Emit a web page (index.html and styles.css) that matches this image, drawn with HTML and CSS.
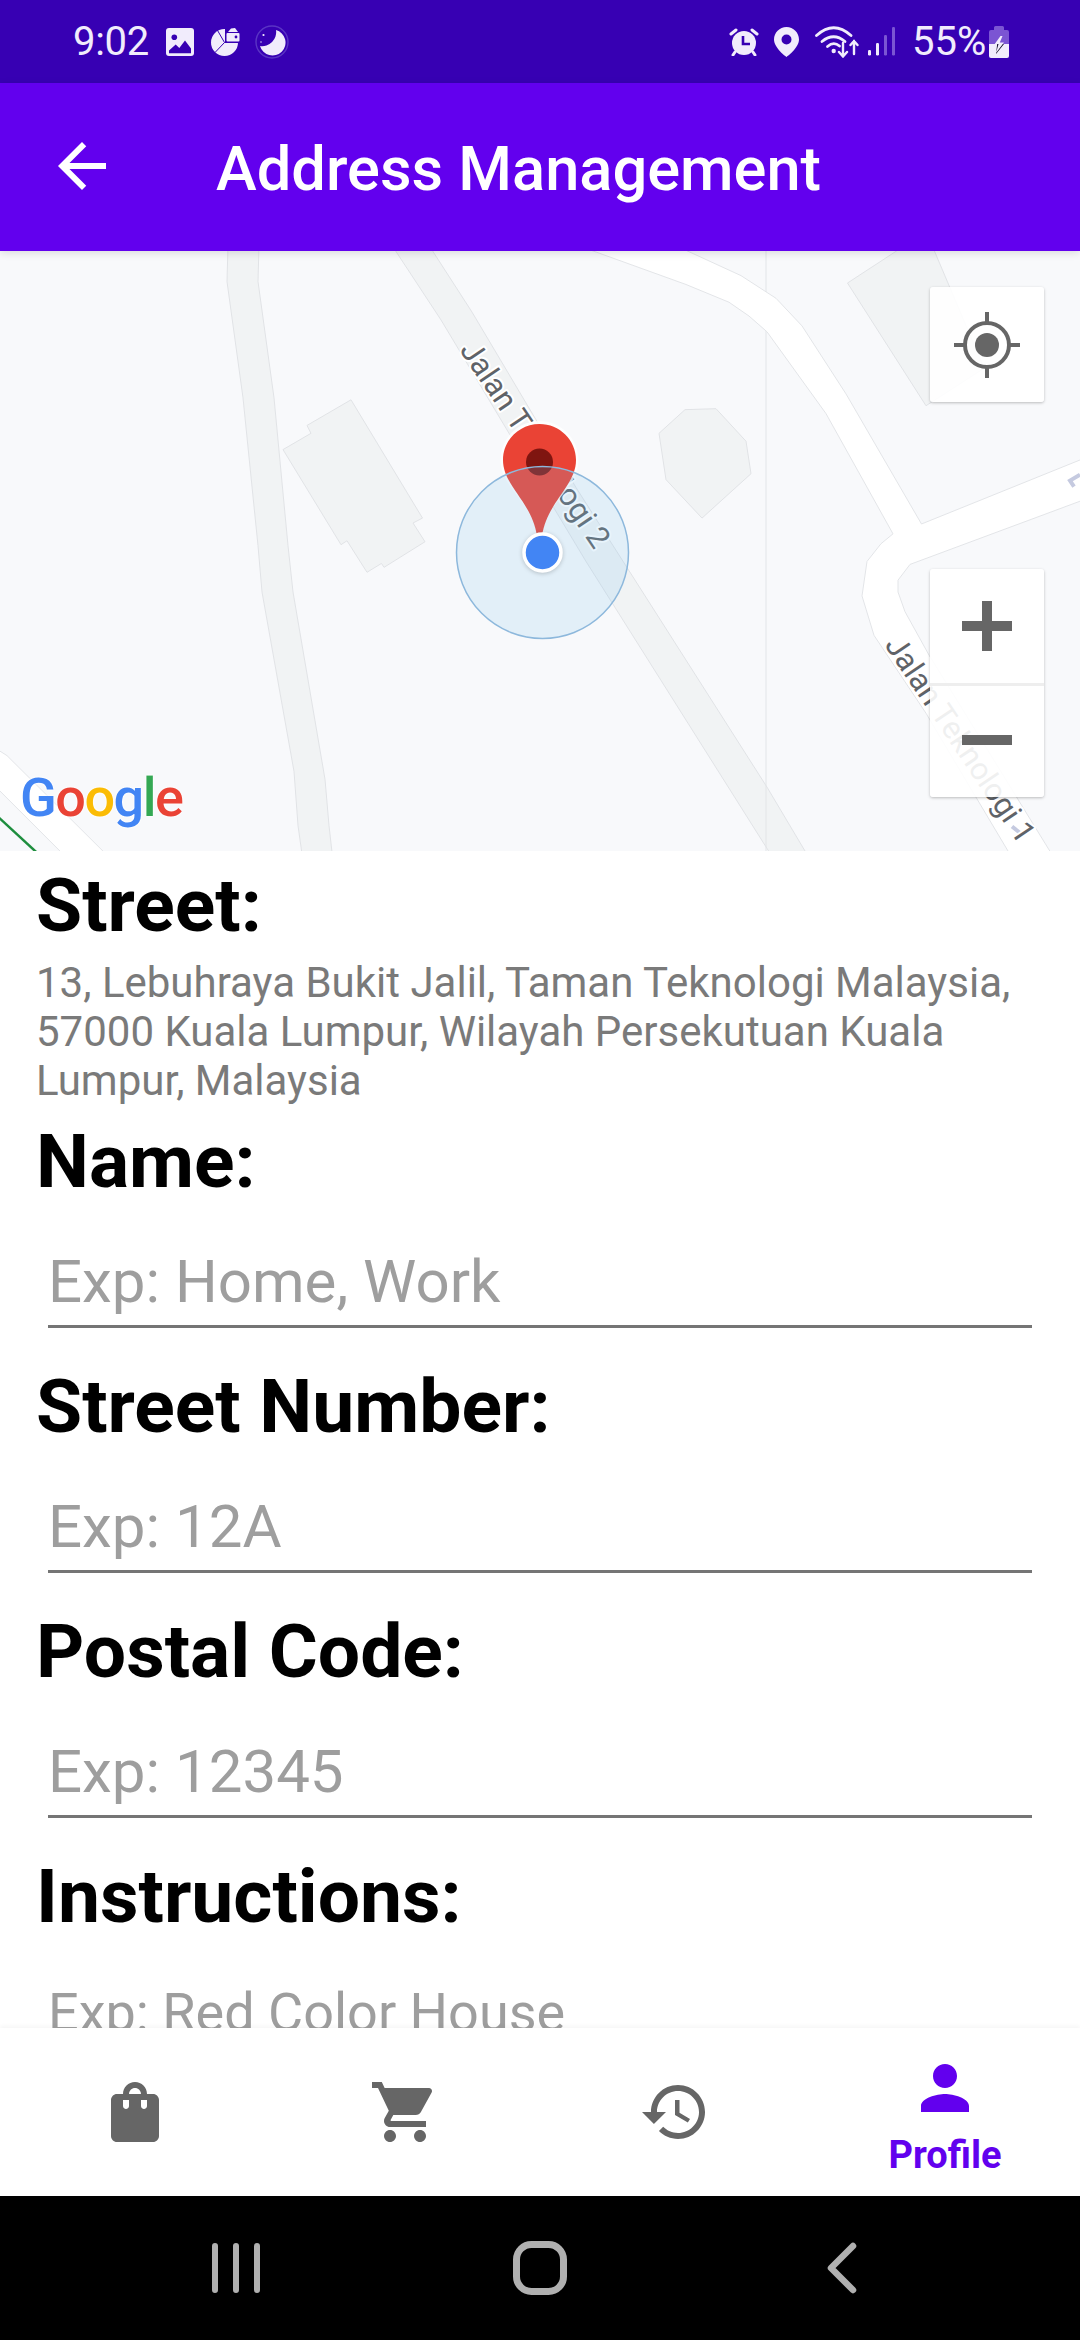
FILE: index.html
```html
<!DOCTYPE html>
<html lang="en">
<head>
<meta charset="utf-8">
<title>Address Management</title>
<link rel="stylesheet" href="styles.css">
</head>
<body>
<div class="phone">
  <header class="status">
    <div class="status-left">
      <span class="time">9:02</span>
      <svg class="ic-image" viewBox="0 0 28 28"><rect width="28" height="28" rx="3" fill="#f1ecfc"/><circle cx="8.3" cy="9.3" r="2.8" fill="#3700B3"/><path d="M3 25.3V22.5L9.7 16.5 13.3 20 19 12.5 25 20.5V25.3Z" fill="#3700B3"/></svg>
      <svg class="ic-pie" viewBox="0 0 30 30"><circle cx="13.5" cy="15.5" r="13.5" fill="#f1ecfc"/><path d="M13.5 15.5 6 2.5M13.5 15.5 4 25.5M13.5 15.5H29" stroke="#3700B3" stroke-width="1" fill="none"/><rect x="14" y="0" width="16" height="15.5" fill="#3700B3"/><rect x="15.5" y="6" width="13" height="8.5" rx="1" fill="#f1ecfc"/><path d="M17 5 20 1.5 24 1 27 5Z" fill="#f1ecfc"/><circle cx="25" cy="10" r="1.4" fill="#3700B3"/></svg>
      <svg class="ic-moon" viewBox="0 0 34 34"><circle cx="17" cy="17" r="16" fill="none" stroke="#5a34c4" stroke-width="1.4"/><path d="M21 5A13 13 0 1 1 5 21 14 14 0 0 0 21 5Z" fill="#f1ecfc"/><circle cx="8.5" cy="10" r="1.1" fill="#f1ecfc"/><circle cx="6" cy="17" r=".7" fill="#f1ecfc"/></svg>
    </div>
    <div class="status-right">
      <svg class="ic-alarm" viewBox="0 0 30 28"><circle cx="15" cy="15" r="12" fill="#f1ecfc"/><path d="M2 6 7 2M28 6 23 2M6 24 4 27M24 24 26 27" stroke="#f1ecfc" stroke-width="3" stroke-linecap="round"/><path d="M14 8V16H21" stroke="#3700B3" stroke-width="2.6" fill="none"/></svg>
      <svg class="ic-loc" viewBox="0 0 25 30"><path fill-rule="evenodd" fill="#f1ecfc" d="M12.500 0C5.600 0 0 5.600 0 12.500 0 21 12.500 30 12.500 30S25 21 25 12.500C25 5.600 19.400 0 12.500 0ZM12.500 7.500A5 5 0 1 1 12.500 17.500 5 5 0 0 1 12.500 7.500Z"/></svg>
      <svg class="ic-wifi" viewBox="0 0 44 32"><g fill="none" stroke="#f1ecfc" stroke-width="2.8" stroke-linecap="round"><path d="M1.500 9.500Q18.700-6 36 9.500"/><path d="M7 15.500Q18.700 6 30 15.500"/><path d="M12.500 20.500Q18.700 15 24.500 20"/><path d="M28 17V30M24 26 28 30.500 32 26" stroke-width="2.4"/><path d="M39 28V15M35.500 19 39 15 42.500 19" stroke-width="2.4"/></g><circle cx="18.700" cy="25" r="2.200" fill="#f1ecfc"/></svg>
      <svg class="ic-signal" viewBox="0 0 27 29"><rect x="0" y="23" width="3" height="5.500" rx="1.200" fill="#f1ecfc"/><rect x="8" y="16" width="3" height="12.500" rx="1.200" fill="#f1ecfc"/><rect x="16" y="8" width="3" height="20.500" rx="1.200" fill="#7b55d3"/><rect x="24" y="0" width="3" height="28.500" rx="1.200" fill="#7b55d3"/></svg>
      <span class="pct">55%</span>
      <svg class="ic-batt" viewBox="0 0 20 32"><path d="M5 1.500Q5 0 6.500 0H13.500Q15 0 15 1.500V4H18Q20 4 20 6V18H0V6Q0 4 2 4H5Z" fill="#7b55d3"/><path d="M0 18H20V30Q20 32 18 32H2Q0 32 0 30Z" fill="#f1ecfc"/><path d="M11.500 10 5 19H9.500L7 27 15 16.500H10.800L13.500 10Z" fill="#f1ecfc"/><path d="M8.200 18H9.500L7 27 13.800 18H15L7 28Z" fill="#141028"/></svg>
    </div>
  </header>

  <div class="appbar">
    <svg class="back" viewBox="0 0 24 24"><path d="M20 11H7.830l5.590-5.590L12 4l-8 8 8 8 1.410-1.410L7.830 13H20v-2z" fill="#fff"/></svg>
    <h1 class="title">Address Management</h1>
  </div>

  <section class="map">
    <svg class="map-canvas" viewBox="0 251 1080 600">
      <rect x="0" y="251" width="1080" height="600" fill="#f8f9fb"/>
      <g transform="translate(0 3.6) scale(1 .9856)">
        <path class="road-grey" d="M228 245 227 282 243 400 258 550 262 597 294 779 298 834 303 870H333L329 834 325 787 293 597 288 550 274 400 258 282 259 245Z"/>
        <path class="road-grey" d="M395 250 441 321 586 566 760 846 775 870H811L767 795 576 491 537 424 472 313 432 250Z"/>
        <path class="bldg" d="M351 402 307 428 311 436 283 452.500 341 549 347 545 367 577 381.500 568 384 572 425 546 413 527 422.500 522Z"/>
        <path class="bldg" d="M685 412 716 411 746 444 751 477 702 522 666 483 659 436Z"/>
        <path class="bldg" d="M898 250 847.500 283.500 926 408 984 370 934 250Z"/>
        <path class="line" d="M766 240V870"/>
        <path class="road-white" d="M585 248 686 285 729 303Q750 316 767 333L826 416 893 538 881 548 867 566 862 601 874 641 926 720 1014 870H1056L929 661 905 617 898 597 898 585 910 569 1085 503V461L921.500 528 846 396 802 327 776 299 741 276 681 248Z"/>
        <path class="road-white" d="M-10 752 7 763 113 870H70L0 799-10 790Z"/>
        <path class="green" d="M-2 825 46 870"/>
        <path class="arrow" d="M1080 478 1070 484 1074 490M1012 835 1022 843"/>
      </g>
      <text class="road-label" transform="translate(459 350) rotate(56)">Jalan Teknologi 2</text>
      <text class="road-label" transform="translate(884 645) rotate(56)">Jalan Teknologi 1</text>
      <path class="pin-halo" d="M539.500 421C518 421 500.500 438.500 500.500 460 500.500 487 530 500 538 536H541C549 500 578.500 487 578.500 460 578.500 438.500 561 421 539.500 421Z"/>
      <path class="pin" d="M539.500 424C519.500 424 503 440 503 460 503 486 532 502 537 536H542C547 502 576 486 576 460 576 440 559.500 424 539.500 424Z"/>
      <circle cx="539.500" cy="462" r="13.500" fill="#7f1510"/>
      <circle class="accuracy" cx="542.500" cy="552.500" r="86"/>
      <circle class="dot" cx="542.500" cy="552.500" r="18.500"/>
    </svg>
    <div class="logo"><span class="g-b">G</span><span class="g-r">o</span><span class="g-y">o</span><span class="g-b">g</span><span class="g-g">l</span><span class="g-r">e</span></div>
    <button class="map-btn locate" aria-label="My location">
      <svg class="locate-ic" viewBox="0 0 66 66"><circle cx="33" cy="33" r="22" fill="none" stroke="#666" stroke-width="4"/><circle cx="33" cy="33" r="12" fill="#666"/><path d="M33 0V11M33 55V66M0 33H11M55 33H66" stroke="#666" stroke-width="4"/></svg>
    </button>
    <div class="zoom">
      <button class="zoom-btn" aria-label="Zoom in"><svg class="zoom-ic" viewBox="0 0 50 50"><path d="M20 0H30V20H50V30H30V50H20V30H0V20H20Z" fill="#666"/></svg></button>
      <button class="zoom-btn minus" aria-label="Zoom out"><svg class="zoom-ic" viewBox="0 0 50 50"><rect x="0" y="20" width="50" height="10" fill="#666"/></svg></button>
    </div>
  </section>

  <main class="form">
    <div class="label">Street:</div>
    <p class="addr">13, Lebuhraya Bukit Jalil, Taman Teknologi Malaysia, 57000 Kuala Lumpur, Wilayah Persekutuan Kuala Lumpur, Malaysia</p>
    <div class="label name">Name:</div>
    <div class="input">Exp: Home, Work</div>
    <div class="label">Street Number:</div>
    <div class="input">Exp: 12A</div>
    <div class="label">Postal Code:</div>
    <div class="input">Exp: 12345</div>
    <div class="label">Instructions:</div>
    <div class="input input-small">Exp: Red Color House</div>
  </main>

  <nav class="tabs">
    <div class="tab"><svg class="tab-ic" viewBox="0 0 24 24"><path d="M18 6h-2c0-2.210-1.790-4-4-4S8 3.790 8 6H6C4.900 6 4 6.900 4 8v12c0 1.100.9 2 2 2h12c1.100 0 2-.9 2-2V8C20 6.900 19.100 6 18 6zM10 10c0 .55-.45 1-1 1s-1-.45-1-1V8h2v2zM12 4c1.100 0 2 .9 2 2h-4c0-1.100.9-2 2-2zM16 10c0 .55-.45 1-1 1s-1-.45-1-1V8h2v2z"/></svg></div>
    <div class="tab"><svg class="tab-ic" viewBox="0 0 24 24"><path d="M7 18c-1.100 0-1.990.9-1.990 2S5.900 22 7 22s2-.9 2-2-.9-2-2-2zM1 2v2h2l3.600 7.590-1.350 2.450c-.16.28-.25.61-.25.96 0 1.100.9 2 2 2h12v-2H7.420c-.14 0-.25-.11-.25-.25l.03-.12.9-1.630h7.450c.75 0 1.410-.41 1.750-1.030l3.580-6.490c.08-.14.12-.31.12-.48 0-.55-.45-1-1-1H5.210l-.94-2H1zm16 16c-1.100 0-1.990.9-1.990 2s.89 2 1.990 2 2-.9 2-2-.9-2-2-2z"/></svg></div>
    <div class="tab"><svg class="tab-ic" viewBox="0 0 24 24"><path d="M13 3c-4.970 0-9 4.030-9 9H1l3.890 3.890.07.14L9 12H6c0-3.870 3.130-7 7-7s7 3.130 7 7-3.130 7-7 7c-1.930 0-3.680-.79-4.940-2.060l-1.420 1.420C8.270 19.990 10.510 21 13 21c4.970 0 9-4.030 9-9s-4.030-9-9-9zm-1 5v5l4.280 2.540.72-1.210-3.500-2.080V8H12z"/></svg></div>
    <div class="tab active"><svg class="tab-ic" viewBox="0 0 24 24"><path d="M12 12c2.210 0 4-1.790 4-4s-1.790-4-4-4-4 1.790-4 4 1.790 4 4 4zm0 2c-2.670 0-8 1.340-8 4v2h16v-2c0-2.660-5.330-4-8-4z"/></svg><span class="tab-label">Profile</span></div>
  </nav>

  <footer class="sysnav">
    <svg class="sys-recents" viewBox="0 0 48 50"><path d="M3 3V47M24 3V47M45 3V47" stroke="#b0b0b0" stroke-width="6" stroke-linecap="round"/></svg>
    <svg class="sys-home" viewBox="0 0 54 54"><rect x="3.500" y="3.500" width="47" height="47" rx="15" fill="none" stroke="#b0b0b0" stroke-width="7"/></svg>
    <svg class="sys-back" viewBox="0 0 30 52"><path d="M26 4 4 26 26 48" fill="none" stroke="#b0b0b0" stroke-width="6.500" stroke-linecap="round" stroke-linejoin="round"/></svg>
  </footer>
</div>
</body>
</html>
```
FILE: styles.css
```css
* { box-sizing: border-box; }
html, body { margin: 0; padding: 0; }
body { background: #fff; font-family: Roboto, "Liberation Sans", sans-serif; }
.phone { width: 1080px; height: 2340px; display: flex; flex-direction: column; overflow: hidden; }

/* status bar */
.status { height: 83px; flex: none; background: #3700B3; color: #f1ecfc; display: flex; justify-content: space-between; align-items: center; padding: 0 71px 0 73px; font-size: 40px; }
.status-left, .status-right { display: flex; align-items: center; }
.time { width: 74px; margin-right: 19px; line-height: 44px; letter-spacing: -.3px; }
.ic-image { width: 28px; height: 28px; margin-right: 17px; }
.ic-pie { width: 30px; height: 30px; margin-right: 14px; }
.ic-moon { width: 34px; height: 34px; }
.ic-alarm { width: 30px; height: 28px; margin-right: 15px; }
.ic-loc { width: 25px; height: 30px; margin-right: 16px; }
.ic-wifi { width: 44px; height: 32px; margin-right: 9px; }
.ic-signal { width: 27px; height: 29px; margin-right: 17px; }
.pct { width: 71px; margin-right: 6px; line-height: 44px; white-space: nowrap; }
.ic-batt { width: 20px; height: 32px; }

/* app bar */
.appbar { height: 168px; flex: none; background: #6200EE; display: flex; align-items: center; padding-left: 46px; position: relative; z-index: 2; box-shadow: 0 2px 8px rgba(0,0,0,.12); }
.back { width: 72px; height: 72px; flex: none; margin-right: 98px; margin-top: -2px; }
.title { margin: 4px 0 0; color: #fff; font-size: 61.4px; font-weight: 500; line-height: 70px; white-space: nowrap; }

/* map */
.map { height: 600px; flex: none; position: relative; overflow: hidden; background: #f8f9fb; }
.map-canvas { position: absolute; left: 0; top: 0; width: 1080px; height: 600px; display: block; }
.road-grey, .bldg { fill: #f1f3f4; stroke: #e1e3e6; stroke-width: 1; }
.road-white { fill: #fff; stroke: #e3e5e8; stroke-width: 1; }
.line { stroke: #e3e5e8; stroke-width: 1; fill: none; }
.green { stroke: #1e8e3e; stroke-width: 2.5; fill: none; }
.arrow { stroke: #c5cae0; stroke-width: 4; fill: none; }
.road-label { font-family: Roboto, "Liberation Sans", sans-serif; font-size: 31px; fill: #5f6368; stroke: #fff; stroke-width: 4px; paint-order: stroke; stroke-linejoin: round; }
.pin-halo { fill: #fff; opacity: .8; }
.pin { fill: #ea4335; }
.accuracy { fill: rgba(128,194,236,.18); stroke: #8db8dc; stroke-width: 1.5; }
.dot { fill: #4285f4; stroke: #fff; stroke-width: 3.500; filter: drop-shadow(0 1px 2px rgba(0,0,0,.2)); }
.logo { position: absolute; left: 20px; top: 513px; font-family: Roboto, "Open Sans", sans-serif; font-size: 54px; line-height: 68px; font-weight: 500; letter-spacing: -1.500px; text-shadow: 0 0 3px #fff, 0 0 3px #fff; }
.g-b { color: #4285f4; }
.g-r { color: #ea4335; }
.g-y { color: #fbbc05; }
.g-g { color: #34a853; }
.map-btn, .zoom { position: absolute; left: 930px; width: 114px; background: rgba(255,255,255,.9); border-radius: 3px; box-shadow: 0 1px 3px rgba(0,0,0,.25); }
.map-btn { top: 36px; height: 115px; border: 0; padding: 0; display: flex; align-items: center; justify-content: center; }
.locate-ic { width: 66px; height: 66px; display: block; }
.zoom { top: 318px; height: 228px; display: flex; flex-direction: column; }
.zoom-btn { height: 114px; flex: none; border: 0; padding: 0; background: transparent; display: flex; align-items: center; justify-content: center; }
.minus { border-top: 3px solid #eee; padding-bottom: 3px; }
.zoom-ic { width: 50px; height: 50px; display: block; }

/* form */
.form { flex: 1; min-height: 0; overflow: hidden; padding: 12px 36px 0; background: #fff; }
.label { font-size: 75px; line-height: 84px; font-weight: 700; color: #000; white-space: nowrap; }
.addr { margin: 11px 0 0; font-size: 42px; line-height: 49px; color: #7a7a7a; width: 1000px; }
.name { margin-top: 14px; }
.input { height: 125px; margin: 0 12px 36px; padding: 45px 0 9px 0; border-bottom: 3px solid #757575; font-size: 60px; line-height: 68px; color: #9e9e9e; white-space: nowrap; }
.input-small { font-size: 54px; padding-top: 41px; }

/* tabs */
.tabs { height: 168px; flex: none; background: #fff; display: grid; grid-template-columns: repeat(4, 270px); position: relative; box-shadow: 0 -2px 4px rgba(0,0,0,.04); }
.tab { display: flex; flex-direction: column; align-items: center; padding-top: 48px; }
.tab-ic { width: 72px; height: 72px; fill: #666; display: block; flex: none; }
.active { padding-top: 24px; }
.active .tab-ic { fill: #6200EE; }
.tab-label { font-size: 38px; line-height: 42px; font-weight: 700; color: #6200EE; margin-top: 10px; }

/* system nav */
.sysnav { height: 144px; flex: none; background: #000; display: flex; align-items: flex-start; padding-top: 45px; }
.sys-recents { width: 48px; height: 50px; margin: 2px 0 0 212px; }
.sys-home { width: 54px; height: 54px; margin-left: 253px; }
.sys-back { width: 30px; height: 52px; margin: 1px 0 0 260px; }
```
